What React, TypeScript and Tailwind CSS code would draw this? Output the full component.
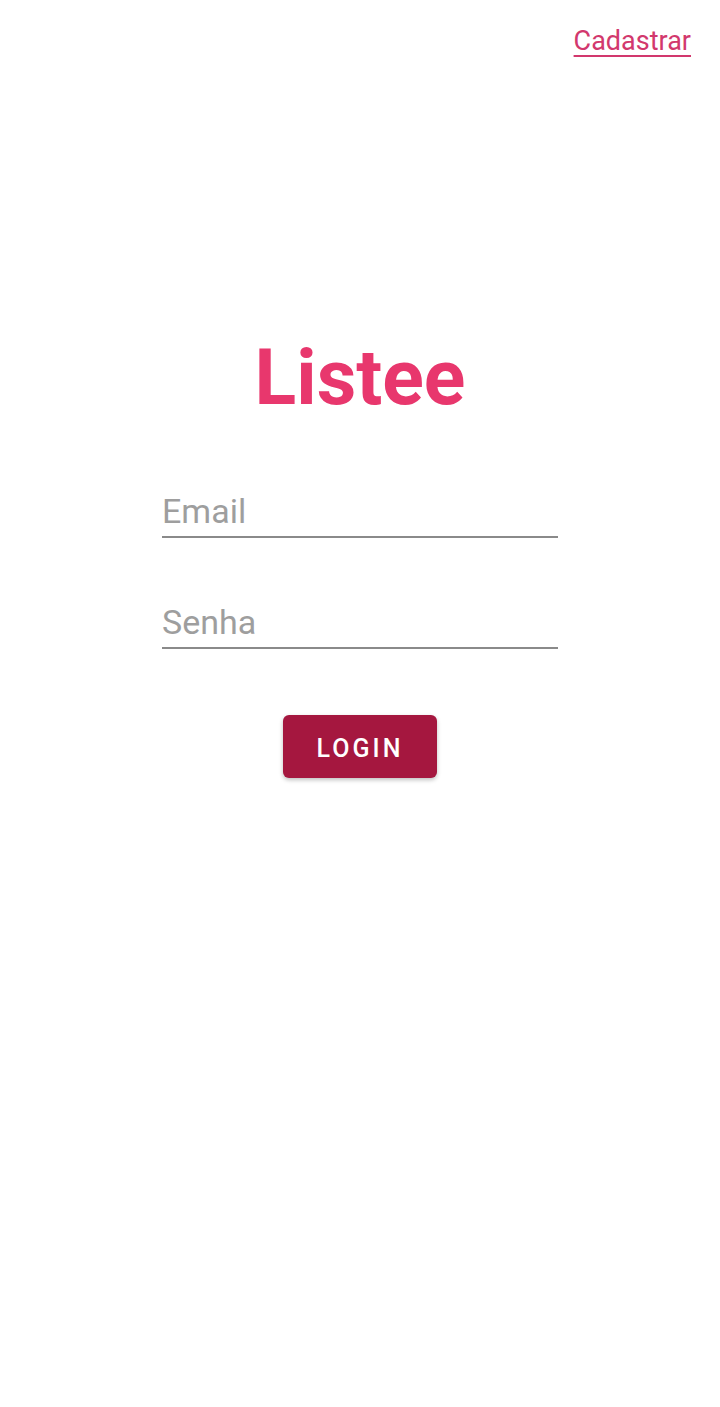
export default function App() {
  return (
    <div className="w-full min-h-[1407px] bg-white flex flex-col font-['Roboto',_sans-serif]">
      <header className="flex justify-end pt-[28px] pr-[29px]">
        <a className="text-[27px] leading-none text-[#d2386d] underline underline-offset-[5px] decoration-[1.5px] cursor-pointer">
          Cadastrar
        </a>
      </header>
      <main className="flex flex-col items-center mt-[285px]">
        <h1 className="text-[77px] leading-none font-bold text-[#e8376d]">Listee</h1>
        <div className="w-[396px] mt-[77px] flex flex-col">
          <input
            placeholder="Email"
            className="w-full text-[34px] leading-none h-[34px] box-content pb-[8px] border-b-2 border-[#8a8a8a] outline-none placeholder:text-[#9e9e9e] text-[#333]"
          />
          <input
            type="password"
            placeholder="Senha"
            className="w-full mt-[67px] text-[34px] leading-none h-[34px] box-content pb-[8px] border-b-2 border-[#8a8a8a] outline-none placeholder:text-[#9e9e9e] text-[#333]"
          />
        </div>
        <button className="mt-[66px] w-[154px] h-[63px] rounded-[6px] bg-[#a5173f] text-white text-[25px] font-medium tracking-[3px] pt-[4px] flex items-center justify-center shadow-[0_2px_4px_rgba(0,0,0,0.25)]">
          LOGIN
        </button>
      </main>
    </div>
  );
}
